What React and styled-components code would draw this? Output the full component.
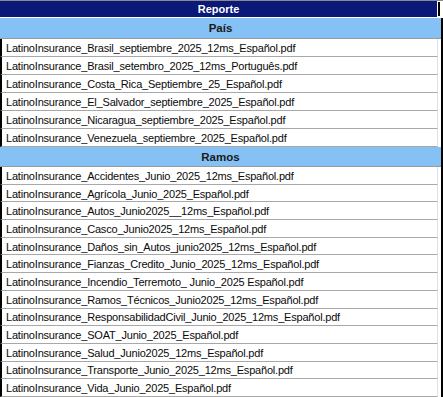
import React from "react";
import styled, { createGlobalStyle } from "styled-components";

const Global = createGlobalStyle`
  html, body { margin: 0; padding: 0; background: #ffffff; }
  body { font-family: "Liberation Sans", Arial, sans-serif; }
`;

const Frame = styled.div`
  width: 443px;
  height: 397px;
  overflow: hidden;
  background: #ffffff;
`;

const TitleRow = styled.div`
  display: flex;
  align-items: stretch;
  height: 17px;
  border-top: 1px solid #8a8a8a;
  box-sizing: border-box;
`;

const Title = styled.div`
  width: 437px;
  background: #0a1878;
  color: #ffffff;
  font-family: "Liberation Sans", Arial, sans-serif;
  font-weight: bold;
  font-size: 11px;
  display: flex;
  align-items: center;
  justify-content: center;
`;

const TitleEdge = styled.div`
  width: 2px;
  margin-left: 1px;
  margin-top: 1px;
  margin-bottom: 1px;
  background: #000000;
`;

const Body = styled.div`
  width: 441px;
  border-right: 2px solid #000000;
  margin-top: 1px;
`;

const Section = styled.div`
  height: ${(p) => p.$h}px;
  background: #85c1f5;
  color: #1a1a1a;
  font-family: "Liberation Sans", Arial, sans-serif;
  font-weight: bold;
  font-size: 11.5px;
  display: flex;
  align-items: center;
  justify-content: center;
  border-bottom: 1px solid #9a9a9a;
  box-sizing: border-box;
`;

const Row = styled.div`
  height: ${(p) => p.$h}px;
  box-sizing: border-box;
  border-left: 2px solid #000000;
  border-bottom: 1px solid #a8a8a8;
  margin-right: 3px;
  border-right: 1px solid #e2e2e2;
  display: flex;
  align-items: center;
  padding-left: 4px;
  padding-top: 1px;
  font-family: "Liberation Sans", Arial, sans-serif;
  font-size: 11px;
  letter-spacing: -0.2px;
  color: #0a0a0a;
  white-space: nowrap;
`;

const pais = [
  "LatinoInsurance_Brasil_septiembre_2025_12ms_Español.pdf",
  "LatinoInsurance_Brasil_setembro_2025_12ms_Português.pdf",
  "LatinoInsurance_Costa_Rica_Septiembre_25_Español.pdf",
  "LatinoInsurance_El_Salvador_septiembre_2025_Español.pdf",
  "LatinoInsurance_Nicaragua_septiembre_2025_Español.pdf",
  "LatinoInsurance_Venezuela_septiembre_2025_Español.pdf",
];

const ramos = [
  "LatinoInsurance_Accidentes_Junio_2025_12ms_Español.pdf",
  "LatinoInsurance_Agrícola_Junio_2025_Español.pdf",
  "LatinoInsurance_Autos_Junio2025__12ms_Español.pdf",
  "LatinoInsurance_Casco_Junio2025_12ms_Español.pdf",
  "LatinoInsurance_Daños_sin_Autos_junio2025_12ms_Español.pdf",
  "LatinoInsurance_Fianzas_Credito_Junio_2025_12ms_Español.pdf",
  "LatinoInsurance_Incendio_Terremoto_ Junio_2025 Español.pdf",
  "LatinoInsurance_Ramos_Técnicos_Junio2025_12ms_Español.pdf",
  "LatinoInsurance_ResponsabilidadCivil_Junio_2025_12ms_Español.pdf",
  "LatinoInsurance_SOAT_Junio_2025_Español.pdf",
  "LatinoInsurance_Salud_Junio2025_12ms_Español.pdf",
  "LatinoInsurance_Transporte_Junio_2025_12ms_Español.pdf",
  "LatinoInsurance_Vida_Junio_2025_Español.pdf",
];

export default function App() {
  return (
    <Frame>
      <Global />
      <TitleRow>
        <Title>Reporte</Title>
        <TitleEdge />
      </TitleRow>
      <Body>
        <Section $h={21}>País</Section>
        {pais.map((t) => (
          <Row key={t} $h={18}>{t}</Row>
        ))}
        <Section $h={20}>Ramos</Section>
        {ramos.map((t) => (
          <Row key={t} $h={17.7}>{t}</Row>
        ))}
      </Body>
    </Frame>
  );
}
